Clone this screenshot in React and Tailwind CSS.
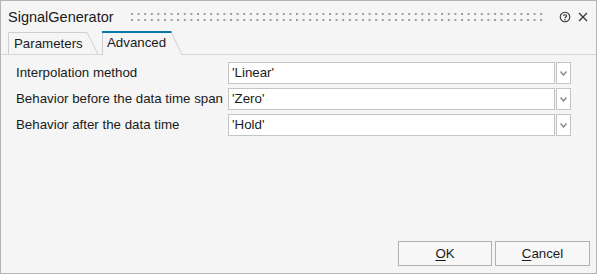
import React from 'react';

const rows = [
  { label: 'Interpolation method', value: "'Linear'" },
  { label: 'Behavior before the data time span', value: "'Zero'" },
  { label: 'Behavior after the data time', value: "'Hold'" },
];

const Grip = () => (
  <svg className="flex-1 h-[10px] ml-[17px] mr-[14px] mt-[3px]" aria-hidden="true">
    <defs>
      <pattern id="dots" width="6.6" height="6" patternUnits="userSpaceOnUse">
        <rect x="0" y="1" width="2" height="2" fill="#9c9c9c" />
      </pattern>
    </defs>
    <rect x="0" y="0" width="100%" height="9" fill="url(#dots)" />
  </svg>
);

const TabShape = ({ width, slant, selected }) => (
  <svg className="absolute inset-0 w-full h-full" aria-hidden="true">
    <path
      d={`M0.5 ${selected ? 24 : 22} V0.5 H${width - slant} L${width} ${selected ? 24 : 22}`}
      fill="#f5f5f5"
      stroke="#cfcfcf"
    />
    {selected && <line x1="0" y1="1" x2={width - slant + 0.5} y2="1" stroke="#0a78ad" strokeWidth="2" />}
  </svg>
);

const Dropdown = ({ value }) => (
  <div className="flex h-[22px] gap-px">
    <div className="flex-1 bg-white border border-[#c4c4c4] flex items-center pl-[3px] text-[13.3px] text-[#1a1a1a]">
      {value}
    </div>
    <div className="w-[15px] bg-white border border-[#c4c4c4] flex items-center justify-center">
      <svg width="7" height="5" viewBox="0 0 7 5">
        <path d="M0.5 0.5 L3.5 4 L6.5 0.5" fill="none" stroke="#8a8a8a" strokeWidth="1.5" />
      </svg>
    </div>
  </div>
);

const Button = ({ hot, rest, width }) => (
  <button className={`${width} h-[25px] border border-[#b0b0b0] bg-[#f7f7f7] text-[13.3px] text-[#1a1a1a] flex items-center justify-center`}>
    <span className="underline underline-offset-2 decoration-1">{hot}</span>
    {rest}
  </button>
);

export default function App() {
  return (
    <div
      className="w-[597px] h-[274px] border border-[#b4b4b4] bg-[#f5f5f5] flex flex-col text-[#1a1a1a]"
      style={{ fontFamily: '"Liberation Sans", Arial, sans-serif' }}
    >
      {/* title bar */}
      <div className="h-[29px] flex items-center pl-[7px] pr-[8px]">
        <span className="text-[14.5px] leading-none pt-[3px]">SignalGenerator</span>
        <Grip />
        <svg width="12" height="12" viewBox="0 0 12 12" className="mt-[3px]">
          <circle cx="6" cy="6" r="4.8" fill="none" stroke="#333" strokeWidth="1.1" />
          <path d="M4.4 4.8 C4.4 3.4 7.6 3.4 7.6 4.9 C7.6 6 6 5.9 6 7.2" fill="none" stroke="#333" strokeWidth="1.1" />
          <circle cx="6" cy="8.7" r="0.7" fill="#333" />
        </svg>
        <svg width="10" height="10" viewBox="0 0 10 10" className="ml-[7px] mt-[3px]">
          <path d="M1 1 L9 9 M9 1 L1 9" stroke="#333" strokeWidth="1.2" />
        </svg>
      </div>

      {/* tab strip */}
      <div className="h-[25px] flex items-end pl-[7px] gap-[4px] border-b border-[#d6d6d6]">
        <div className="relative w-[90px] h-[22px] flex items-center pl-[6px] text-[13.3px]">
          <TabShape width={90} slant={11} />
          <span className="relative pt-[2px]">Parameters</span>
        </div>
        <div className="relative w-[80px] h-[24px] -mb-px flex items-center pl-[5px] text-[13.3px]">
          <TabShape width={80} slant={11} selected />
          <span className="relative">Advanced</span>
        </div>
      </div>

      {/* parameters */}
      <div className="flex-1 flex flex-col gap-[4px] pt-[7px] pl-[15px] pr-[25px]">
        {rows.map((r) => (
          <div key={r.label} className="grid grid-cols-[212px_1fr] items-center">
            <span className="text-[13.3px] whitespace-nowrap">{r.label}</span>
            <Dropdown value={r.value} />
          </div>
        ))}
      </div>

      {/* buttons */}
      <div className="flex justify-end gap-[3px] pr-[6px] pb-[7px]">
        <Button hot="O" rest="K" width="w-[94px]" />
        <Button hot="C" rest="ancel" width="w-[95px]" />
      </div>
    </div>
  );
}
